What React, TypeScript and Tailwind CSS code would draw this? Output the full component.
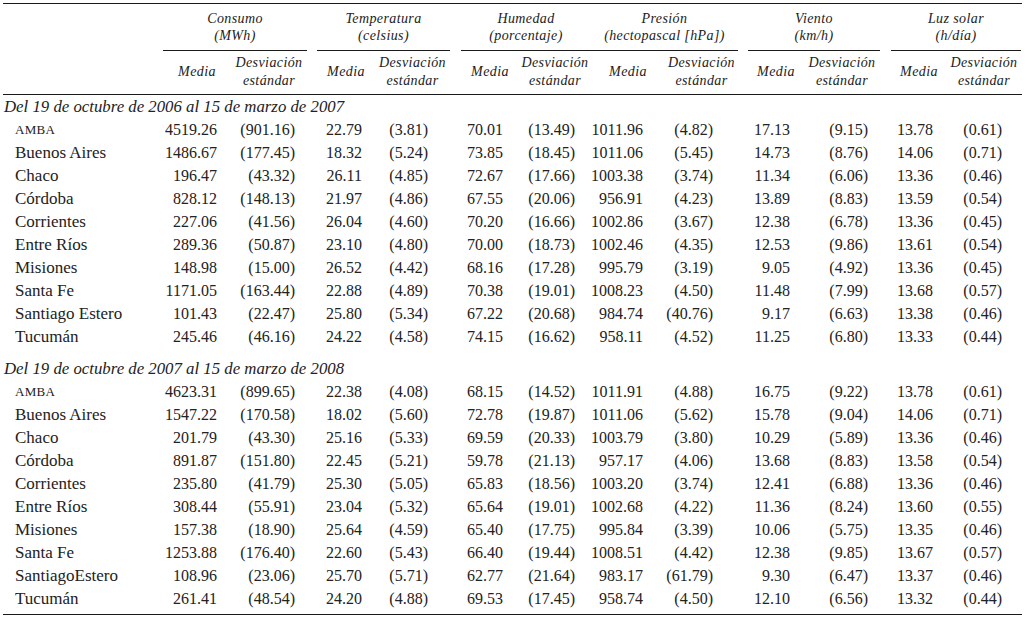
const groups = [
  { top: "Consumo", unit: "(MWh)", cls: "w-[144px]" },
  { top: "Temperatura", unit: "(celsius)", cls: "ml-[10px] w-[133px]" },
  { top: "Humedad", unit: "(porcentaje)", cls: "ml-[11px] w-[130px]" },
  { top: "Presión", unit: "(hectopascal [hPa])", cls: "w-[147px]" },
  { top: "Viento", unit: "(km/h)", cls: "ml-[10px] w-[132px]" },
  { top: "Luz solar", unit: "(h/día)", cls: "ml-[11px] w-[130px]" },
];

// column boxes for the sub headers (centered text)
const headCols = [
  "w-[68px]",
  "w-[76px]",
  "ml-[10px] w-[58px]",
  "w-[75px]",
  "ml-[11px] w-[58px]",
  "w-[72px]",
  "w-[74px]",
  "w-[73px]",
  "ml-[10px] w-[56px]",
  "w-[76px]",
  "ml-[11px] w-[56px]",
  "w-[74px]",
];

// same boxes for the data (right aligned)
const dataCols = [
  "w-[68px] pr-[14px]",
  "w-[76px] pr-[12px]",
  "ml-[10px] w-[58px] pr-[13px]",
  "w-[75px] pr-[22px]",
  "ml-[11px] w-[58px] pr-[16px]",
  "w-[72px] pr-[16px]",
  "w-[74px] pr-[22px]",
  "w-[73px] pr-[25px]",
  "ml-[10px] w-[56px] pr-[14px]",
  "w-[76px] pr-[12px]",
  "ml-[11px] w-[56px] pr-[14px]",
  "w-[74px] pr-[19px]",
];

type Row = [string, ...string[]];

const period1: Row[] = [
  ["AMBA", "4519.26", "(901.16)", "22.79", "(3.81)", "70.01", "(13.49)", "1011.96", "(4.82)", "17.13", "(9.15)", "13.78", "(0.61)"],
  ["Buenos Aires", "1486.67", "(177.45)", "18.32", "(5.24)", "73.85", "(18.45)", "1011.06", "(5.45)", "14.73", "(8.76)", "14.06", "(0.71)"],
  ["Chaco", "196.47", "(43.32)", "26.11", "(4.85)", "72.67", "(17.66)", "1003.38", "(3.74)", "11.34", "(6.06)", "13.36", "(0.46)"],
  ["Córdoba", "828.12", "(148.13)", "21.97", "(4.86)", "67.55", "(20.06)", "956.91", "(4.23)", "13.89", "(8.83)", "13.59", "(0.54)"],
  ["Corrientes", "227.06", "(41.56)", "26.04", "(4.60)", "70.20", "(16.66)", "1002.86", "(3.67)", "12.38", "(6.78)", "13.36", "(0.45)"],
  ["Entre Ríos", "289.36", "(50.87)", "23.10", "(4.80)", "70.00", "(18.73)", "1002.46", "(4.35)", "12.53", "(9.86)", "13.61", "(0.54)"],
  ["Misiones", "148.98", "(15.00)", "26.52", "(4.42)", "68.16", "(17.28)", "995.79", "(3.19)", "9.05", "(4.92)", "13.36", "(0.45)"],
  ["Santa Fe", "1171.05", "(163.44)", "22.88", "(4.89)", "70.38", "(19.01)", "1008.23", "(4.50)", "11.48", "(7.99)", "13.68", "(0.57)"],
  ["Santiago Estero", "101.43", "(22.47)", "25.80", "(5.34)", "67.22", "(20.68)", "984.74", "(40.76)", "9.17", "(6.63)", "13.38", "(0.46)"],
  ["Tucumán", "245.46", "(46.16)", "24.22", "(4.58)", "74.15", "(16.62)", "958.11", "(4.52)", "11.25", "(6.80)", "13.33", "(0.44)"],
];

const period2: Row[] = [
  ["AMBA", "4623.31", "(899.65)", "22.38", "(4.08)", "68.15", "(14.52)", "1011.91", "(4.88)", "16.75", "(9.22)", "13.78", "(0.61)"],
  ["Buenos Aires", "1547.22", "(170.58)", "18.02", "(5.60)", "72.78", "(19.87)", "1011.06", "(5.62)", "15.78", "(9.04)", "14.06", "(0.71)"],
  ["Chaco", "201.79", "(43.30)", "25.16", "(5.33)", "69.59", "(20.33)", "1003.79", "(3.80)", "10.29", "(5.89)", "13.36", "(0.46)"],
  ["Córdoba", "891.87", "(151.80)", "22.45", "(5.21)", "59.78", "(21.13)", "957.17", "(4.06)", "13.68", "(8.83)", "13.58", "(0.54)"],
  ["Corrientes", "235.80", "(41.79)", "25.30", "(5.05)", "65.83", "(18.56)", "1003.20", "(3.74)", "12.41", "(6.88)", "13.36", "(0.46)"],
  ["Entre Ríos", "308.44", "(55.91)", "23.04", "(5.32)", "65.64", "(19.01)", "1002.68", "(4.22)", "11.36", "(8.24)", "13.60", "(0.55)"],
  ["Misiones", "157.38", "(18.90)", "25.64", "(4.59)", "65.40", "(17.75)", "995.84", "(3.39)", "10.06", "(5.75)", "13.35", "(0.46)"],
  ["Santa Fe", "1253.88", "(176.40)", "22.60", "(5.43)", "66.40", "(19.44)", "1008.51", "(4.42)", "12.38", "(9.85)", "13.67", "(0.57)"],
  ["SantiagoEstero", "108.96", "(23.06)", "25.70", "(5.71)", "62.77", "(21.64)", "983.17", "(61.79)", "9.30", "(6.47)", "13.37", "(0.46)"],
  ["Tucumán", "261.41", "(48.54)", "24.20", "(4.88)", "69.53", "(17.45)", "958.74", "(4.50)", "12.10", "(6.56)", "13.32", "(0.44)"],
];

function DataRow({ row }: { row: Row }) {
  const [label, ...values] = row;
  return (
    <div className="flex h-[23px] items-center text-[16px]">
      <div className={`w-[160px] shrink-0 pl-[12px] ${label === "AMBA" ? "text-[13px] tracking-[0.3px]" : "text-[17px]"}`}>
        {label}
      </div>
      {values.map((v, i) => (
        <div key={i} className={`shrink-0 text-right ${dataCols[i]}`}>
          {v}
        </div>
      ))}
    </div>
  );
}

function Period({ title, rows, first }: { title: string; rows: Row[]; first?: boolean }) {
  return (
    <div className={first ? "" : "mt-[9px]"}>
      <div className="flex h-[23px] items-center pl-[1px] text-[16.8px] italic">{title}</div>
      {rows.map((r) => (
        <DataRow key={r[0]} row={r} />
      ))}
    </div>
  );
}

export default function App() {
  return (
    <div className="min-h-screen bg-white text-[#222] font-['Liberation_Serif',serif]">
      <div className="ml-[3px] mt-[3px] w-[1019px] border-t-[1.5px] border-[#1a1a1a]">
        {/* group headers */}
        <div className="flex pt-[6px] text-[14px] italic leading-[17px] tracking-[0.4px]">
          <div className="w-[160px] shrink-0" />
          {groups.map((g) => (
            <div key={g.top} className={`shrink-0 border-b border-[#1a1a1a] pb-[6px] text-center ${g.cls}`}>
              <div>{g.top}</div>
              <div>{g.unit}</div>
            </div>
          ))}
        </div>

        {/* sub headers */}
        <div className="flex items-center border-b-[1.5px] border-[#1a1a1a] pb-[4px] pt-[3px] text-[14px] italic leading-[18px] tracking-[0.4px]">
          <div className="w-[160px] shrink-0" />
          {headCols.map((c, i) => (
            <div key={i} className={`shrink-0 text-center ${c}`}>
              {i % 2 === 0 ? (
                "Media"
              ) : (
                <>
                  <div>Desviación</div>
                  <div>estándar</div>
                </>
              )}
            </div>
          ))}
        </div>

        <div className="border-b-[1.5px] border-[#1a1a1a] pb-[4px]">
          <Period first title="Del 19 de octubre de 2006 al 15 de marzo de 2007" rows={period1} />
          <Period title="Del 19 de octubre de 2007 al 15 de marzo de 2008" rows={period2} />
        </div>
      </div>
    </div>
  );
}
